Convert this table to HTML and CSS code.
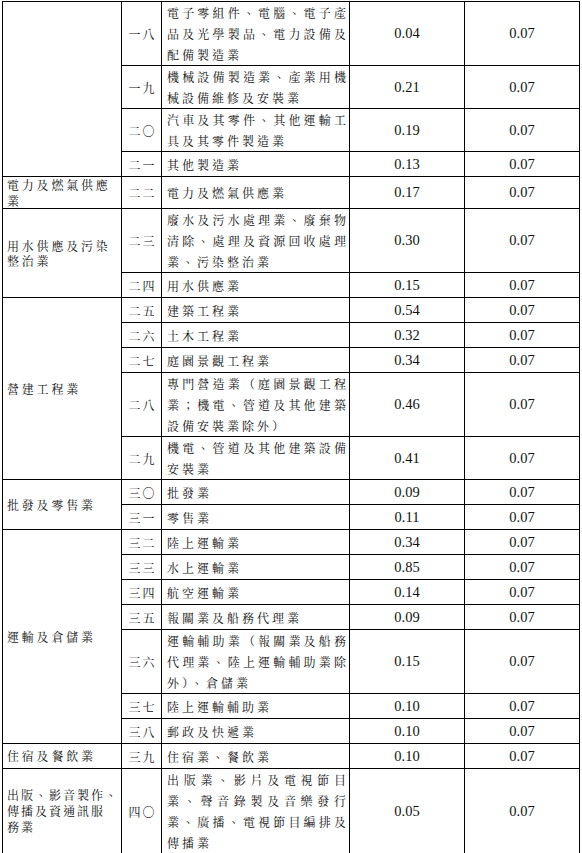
FILE: index.html
```html
<!DOCTYPE html>
<html lang="zh-Hant">
<head>
<meta charset="utf-8">
<link rel="stylesheet" href="styles.css">
</head>
<body>
<table class="tbl">
<colgroup>
<col class="c1"><col class="c2"><col class="c3"><col class="c4"><col class="c5">
</colgroup>
<tbody>
<tr>
<td class="cat" rowspan="4"></td>
<td class="code">一八</td>
<td class="name"><span class="j">電子零組件、電腦、電子產</span><span class="j">品及光學製品、電力設備及</span>配備製造業</td>
<td class="num">0.04</td><td class="num">0.07</td>
</tr>
<tr>
<td class="code">一九</td>
<td class="name"><span class="j">機械設備製造業、產業用機</span>械設備維修及安裝業</td>
<td class="num">0.21</td><td class="num">0.07</td>
</tr>
<tr>
<td class="code">二〇</td>
<td class="name"><span class="j">汽車及其零件、其他運輸工</span>具及其零件製造業</td>
<td class="num">0.19</td><td class="num">0.07</td>
</tr>
<tr>
<td class="code">二一</td>
<td class="name">其他製造業</td>
<td class="num">0.13</td><td class="num">0.07</td>
</tr>
<tr>
<td class="cat top">電力及燃氣供應<br>業</td>
<td class="code">二二</td>
<td class="name">電力及燃氣供應業</td>
<td class="num">0.17</td><td class="num">0.07</td>
</tr>
<tr>
<td class="cat" rowspan="2">用水供應及污染<br>整治業</td>
<td class="code">二三</td>
<td class="name"><span class="j">廢水及污水處理業、廢棄物</span><span class="j">清除、處理及資源回收處理</span>業、污染整治業</td>
<td class="num">0.30</td><td class="num">0.07</td>
</tr>
<tr>
<td class="code">二四</td>
<td class="name">用水供應業</td>
<td class="num">0.15</td><td class="num">0.07</td>
</tr>
<tr>
<td class="cat" rowspan="5">營建工程業</td>
<td class="code">二五</td>
<td class="name">建築工程業</td>
<td class="num">0.54</td><td class="num">0.07</td>
</tr>
<tr>
<td class="code">二六</td>
<td class="name">土木工程業</td>
<td class="num">0.32</td><td class="num">0.07</td>
</tr>
<tr>
<td class="code">二七</td>
<td class="name">庭園景觀工程業</td>
<td class="num">0.34</td><td class="num">0.07</td>
</tr>
<tr>
<td class="code">二八</td>
<td class="name"><span class="j">專門營造業（庭園景觀工程</span><span class="j">業；機電、管道及其他建築</span>設備安裝業除外）</td>
<td class="num">0.46</td><td class="num">0.07</td>
</tr>
<tr>
<td class="code">二九</td>
<td class="name"><span class="j">機電、管道及其他建築設備</span>安裝業</td>
<td class="num">0.41</td><td class="num">0.07</td>
</tr>
<tr>
<td class="cat" rowspan="2">批發及零售業</td>
<td class="code">三〇</td>
<td class="name">批發業</td>
<td class="num">0.09</td><td class="num">0.07</td>
</tr>
<tr>
<td class="code">三一</td>
<td class="name">零售業</td>
<td class="num">0.11</td><td class="num">0.07</td>
</tr>
<tr>
<td class="cat" rowspan="7">運輸及倉儲業</td>
<td class="code">三二</td>
<td class="name">陸上運輸業</td>
<td class="num">0.34</td><td class="num">0.07</td>
</tr>
<tr>
<td class="code">三三</td>
<td class="name">水上運輸業</td>
<td class="num">0.85</td><td class="num">0.07</td>
</tr>
<tr>
<td class="code">三四</td>
<td class="name">航空運輸業</td>
<td class="num">0.14</td><td class="num">0.07</td>
</tr>
<tr>
<td class="code">三五</td>
<td class="name">報關業及船務代理業</td>
<td class="num">0.09</td><td class="num">0.07</td>
</tr>
<tr>
<td class="code">三六</td>
<td class="name"><span class="j">運輸輔助業（報關業及船務</span><span class="j">代理業、陸上運輸輔助業除</span>外）、倉儲業</td>
<td class="num">0.15</td><td class="num">0.07</td>
</tr>
<tr>
<td class="code">三七</td>
<td class="name">陸上運輸輔助業</td>
<td class="num">0.10</td><td class="num">0.07</td>
</tr>
<tr>
<td class="code">三八</td>
<td class="name">郵政及快遞業</td>
<td class="num">0.10</td><td class="num">0.07</td>
</tr>
<tr>
<td class="cat">住宿及餐飲業</td>
<td class="code">三九</td>
<td class="name">住宿業、餐飲業</td>
<td class="num">0.10</td><td class="num">0.07</td>
</tr>
<tr>
<td class="cat narrow">出版、影音製作、<br>傳播及資通訊服<br>務業</td>
<td class="code">四〇</td>
<td class="name"><span class="j">出版業、影片及電視節目</span><span class="j">業、聲音錄製及音樂發行</span><span class="j">業、廣播、電視節目編排及</span>傳播業</td>
<td class="num">0.05</td><td class="num">0.07</td>
</tr>
</tbody>
</table>
</body>
</html>
```
FILE: styles.css
```css
body {
  margin: 0;
  background: #fff;
}

.tbl {
  border-collapse: collapse;
  table-layout: fixed;
  width: 578px;
  margin: 1px 0 0 2px;
  font-family: "Noto Serif CJK TC", "Noto Sans CJK TC", sans-serif;
  font-size: 12px;
  color: #111;
}

.c1 { width: 119px; }
.c2 { width: 40px; }
.c3 { width: 188px; }
.c4 { width: 115px; }
.c5 { width: 115px; }

.tbl td {
  border: 1px solid #000;
  padding: 0 3px 0 5px;
  height: 24px;
  line-height: 21px;
  vertical-align: middle;
  white-space: nowrap;
  overflow: visible;
}

.tbl td.cat {
  letter-spacing: 2.8px;
  line-height: 15.5px;
  padding-left: 4px;
}

.tbl td.cat.narrow {
  letter-spacing: 2px;
  line-height: 16px;
}

.tbl td.cat.top {
  vertical-align: top;
}

.tbl td.code {
  text-align: center;
  letter-spacing: 2px;
  padding: 0 0 0 2px;
}

.tbl td.name {
  letter-spacing: 3px;
  padding-left: 5px;
  padding-right: 0;
}

.name .j {
  display: block;
  text-align: justify;
  text-align-last: justify;
}

.tbl td.num {
  text-align: center;
  font-family: "Liberation Serif", "Times New Roman", serif;
  font-size: 14.5px;
  padding: 0;
}
```
